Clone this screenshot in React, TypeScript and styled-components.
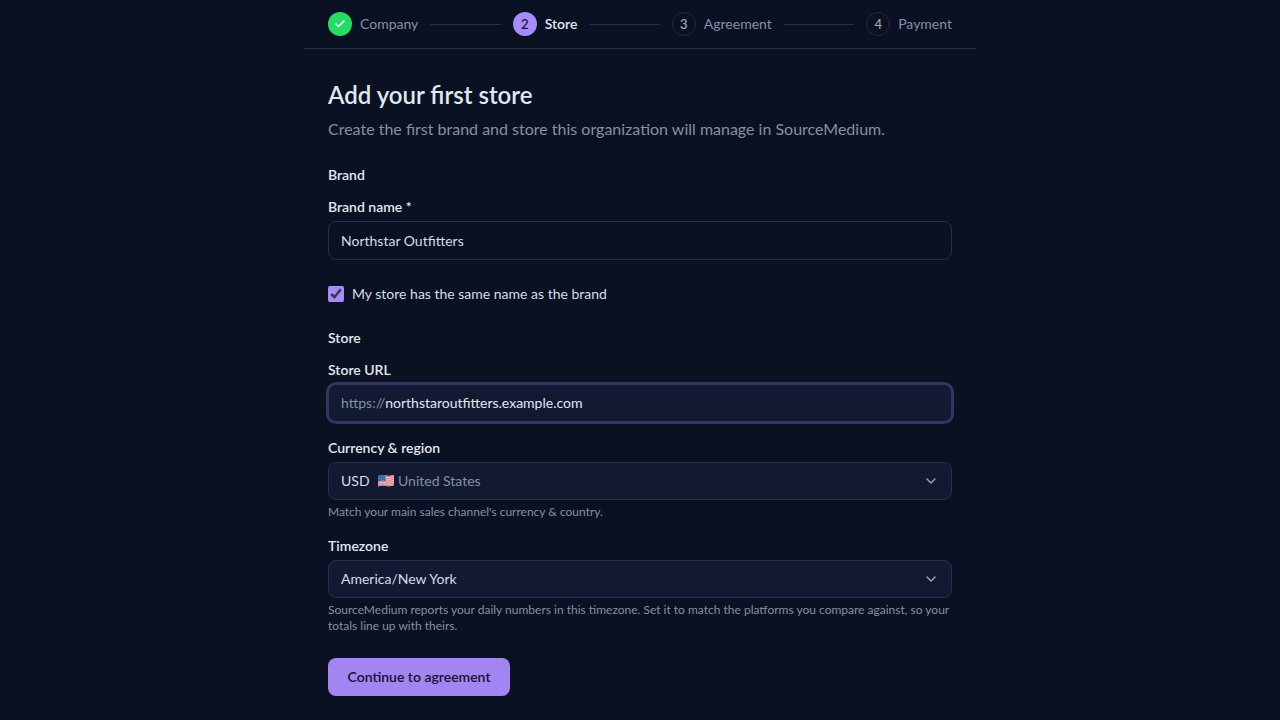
import { Check, ChevronDown } from "lucide-react";
import { Fragment, useState } from "react";
import type { ReactNode } from "react";
import styled, { createGlobalStyle, css } from "styled-components";

const color = {
  page: "#0a1122",
  panel: "#111a31",
  border: "#27304f",
  ring: "#353463",
  text: "#e2e8f0",
  value: "#d6dce8",
  muted: "#8490a6",
  accent: "#a78bfa",
  button: "#a385f1",
  success: "#25dc65",
  ink: "#151033",
};

const GlobalStyle = createGlobalStyle`
  *, *::before, *::after { box-sizing: border-box; }
  body {
    margin: 0;
    background: ${color.page};
    color: ${color.text};
    color-scheme: dark;
    font-family: Lato, "Liberation Sans", sans-serif;
    font-size: 14px;
    line-height: 20px;
    -webkit-font-smoothing: antialiased;
  }
  button, input, select { font: inherit; color: inherit; }
`;

const Page = styled.div`
  max-width: 672px;
  margin: 0 auto;
`;

const Stepper = styled.ol`
  display: flex;
  align-items: center;
  gap: 12px;
  margin: 0;
  padding: 12px 24px;
  border-bottom: 1px solid ${color.border};
  list-style: none;
`;

type StepState = "done" | "current" | "upcoming";

const Step = styled.li<{ $state: StepState }>`
  display: flex;
  align-items: center;
  gap: 8px;
  color: ${(p) => (p.$state === "current" ? color.text : color.muted)};
  font-weight: ${(p) => (p.$state === "current" ? 600 : 400)};
`;

const stepFill = {
  done: css`
    background: ${color.success};
    color: #ffffff;
  `,
  current: css`
    background: ${color.accent};
    color: ${color.ink};
  `,
  upcoming: css`
    border: 1px solid #222a45;
    color: #a0a8ba;
  `,
};

const StepMark = styled.span<{ $state: StepState }>`
  display: grid;
  place-items: center;
  width: 24px;
  height: 24px;
  border-radius: 50%;
  font-size: 13px;
  line-height: 16px;
  font-weight: 500;
  ${(p) => stepFill[p.$state]}
`;

const StepLine = styled.li`
  flex: 1;
  height: 1px;
  background: ${color.border};
`;

const Main = styled.main`
  padding: 32px 24px 24px;
`;

const Title = styled.h1`
  margin: 0 0 8px;
  font-size: 24px;
  line-height: 28px;
  font-weight: 600;
`;

const Intro = styled.p`
  margin: 0;
  color: ${color.muted};
  font-size: 16px;
  line-height: 24px;
`;

const Form = styled.form`
  display: flex;
  flex-direction: column;
  align-items: stretch;
  gap: 24px;
  margin-top: 24px;
`;

const Section = styled.section`
  display: flex;
  flex-direction: column;
  gap: 12px;
`;

const Fields = styled.div`
  display: flex;
  flex-direction: column;
  gap: 16px;
`;

const SectionTitle = styled.h2`
  margin: 0;
  font-size: 14px;
  line-height: 20px;
  font-weight: 600;
`;

const FieldBox = styled.div`
  display: flex;
  flex-direction: column;
  gap: 4px;
`;

const Label = styled.label`
  font-weight: 600;
`;

const Hint = styled.p`
  margin: 0;
  color: ${color.muted};
  font-size: 12px;
  line-height: 16px;
`;

const TextInput = styled.input`
  width: 100%;
  height: 39px;
  padding: 0 12px;
  border: 1px solid ${color.border};
  border-radius: 8px;
  background: transparent;
  color: ${color.value};
  outline: none;
`;

const UrlBox = styled.div`
  display: flex;
  align-items: center;
  height: 38px;
  padding: 0 12px;
  border: 1px solid ${color.ring};
  border-radius: 8px;
  background: ${color.panel};
  box-shadow: 0 0 0 2px ${color.ring};
`;

const UrlPrefix = styled.span`
  color: ${color.muted};
`;

const UrlInput = styled.input`
  flex: 1;
  min-width: 0;
  padding: 0;
  border: 0;
  background: transparent;
  outline: none;
`;

const CheckRow = styled.label`
  display: flex;
  align-items: center;
  gap: 8px;
  color: ${color.value};
`;

const CheckBox = styled.input`
  width: 16px;
  height: 16px;
  margin: 0;
  accent-color: ${color.accent};
`;

const SelectBox = styled.div`
  display: grid;
  align-items: center;

  > * {
    grid-area: 1 / 1;
  }

  > svg {
    justify-self: end;
    margin-right: 13px;
    color: #a0a8ba;
    pointer-events: none;
  }
`;

const Select = styled.select`
  appearance: none;
  width: 100%;
  height: 38px;
  padding: 0 40px 0 12px;
  border: 1px solid ${color.border};
  border-radius: 8px;
  background: ${color.panel};
  color: ${color.value};
`;

const Region = styled.span`
  display: flex;
  align-items: center;
  gap: 4px;
  padding-left: 50px;
  color: ${color.muted};
  pointer-events: none;
`;

const SubmitButton = styled.button`
  align-self: flex-start;
  height: 38px;
  min-width: 182px;
  padding: 0 16px;
  border: 0;
  border-radius: 8px;
  background: ${color.button};
  color: ${color.ink};
  font-weight: 600;
  cursor: pointer;
`;

const steps: { name: string; state: StepState }[] = [
  { name: "Company", state: "done" },
  { name: "Store", state: "current" },
  { name: "Agreement", state: "upcoming" },
  { name: "Payment", state: "upcoming" },
];

function Flag() {
  return (
    <svg width="16" height="14" viewBox="0 0 16 14" aria-hidden="true">
      <path d="M0 2.2C3 .6 5.5.9 8 1.500S13 2 16 .8V11.300C13 12.500 10.500 12.500 8 11.900S3 11.200 0 12.600Z" fill="#f3d3dc" />
      <g fill="none" stroke="#e5667a" strokeWidth="1">
        <path d="M0 2.800C3 1.200 5.500 1.500 8 2.100S13 2.600 16 1.400" />
        <path d="M0 4.700C3 3.100 5.500 3.400 8 4S13 4.500 16 3.300" />
        <path d="M0 6.600C3 5 5.500 5.300 8 5.900S13 6.400 16 5.200" />
        <path d="M0 8.500C3 6.900 5.500 7.200 8 7.800S13 8.300 16 7.100" />
        <path d="M0 10.400C3 8.800 5.500 9.100 8 9.700S13 10.200 16 9" />
        <path d="M0 12.100C3 10.500 5.500 10.800 8 11.400S13 11.900 16 10.700" />
      </g>
      <path d="M0 2.200C3 .6 5 .9 7.500 1.400V7.200C5 6.700 3 6.400 0 7.900Z" fill="#3f6cab" />
    </svg>
  );
}

function Field(props: { id: string; label: string; hint?: string; children: ReactNode }) {
  return (
    <FieldBox>
      <Label htmlFor={props.id}>{props.label}</Label>
      {props.children}
      {props.hint && <Hint>{props.hint}</Hint>}
    </FieldBox>
  );
}

export default function App() {
  const [brand, setBrand] = useState("Northstar Outfitters");
  const [sameName, setSameName] = useState(true);
  const [url, setUrl] = useState("northstaroutfitters.example.com");

  return (
    <Page>
      <GlobalStyle />
      <Stepper>
        {steps.map((step, i) => (
          <Fragment key={step.name}>
            {i > 0 && <StepLine aria-hidden="true" />}
            <Step $state={step.state} aria-current={step.state === "current" ? "step" : undefined}>
              <StepMark $state={step.state}>
                {step.state === "done" ? <Check size={12} strokeWidth={3} /> : i + 1}
              </StepMark>
              {step.name}
            </Step>
          </Fragment>
        ))}
      </Stepper>
      <Main>
        <Title>Add your first store</Title>
        <Intro>Create the first brand and store this organization will manage in SourceMedium.</Intro>
        <Form onSubmit={(e) => e.preventDefault()}>
          <Section>
            <SectionTitle>Brand</SectionTitle>
            <Field id="brand" label="Brand name *">
              <TextInput id="brand" value={brand} onChange={(e) => setBrand(e.target.value)} />
            </Field>
          </Section>
          <CheckRow>
            <CheckBox type="checkbox" checked={sameName} onChange={(e) => setSameName(e.target.checked)} />
            My store has the same name as the brand
          </CheckRow>
          <Section>
            <SectionTitle>Store</SectionTitle>
            <Fields>
              <Field id="url" label="Store URL">
                <UrlBox>
                  <UrlPrefix>https://</UrlPrefix>
                  <UrlInput id="url" value={url} onChange={(e) => setUrl(e.target.value)} />
                </UrlBox>
              </Field>
              <Field id="currency" label="Currency & region" hint="Match your main sales channel's currency & country.">
                <SelectBox>
                  <Select id="currency">
                    <option>USD</option>
                  </Select>
                  <Region>
                    <Flag />
                    United States
                  </Region>
                  <ChevronDown size={16} />
                </SelectBox>
              </Field>
              <Field
                id="timezone"
                label="Timezone"
                hint="SourceMedium reports your daily numbers in this timezone. Set it to match the platforms you compare against, so your totals line up with theirs."
              >
                <SelectBox>
                  <Select id="timezone">
                    <option>America/New York</option>
                  </Select>
                  <ChevronDown size={16} />
                </SelectBox>
              </Field>
            </Fields>
          </Section>
          <SubmitButton type="submit">Continue to agreement</SubmitButton>
        </Form>
      </Main>
    </Page>
  );
}
